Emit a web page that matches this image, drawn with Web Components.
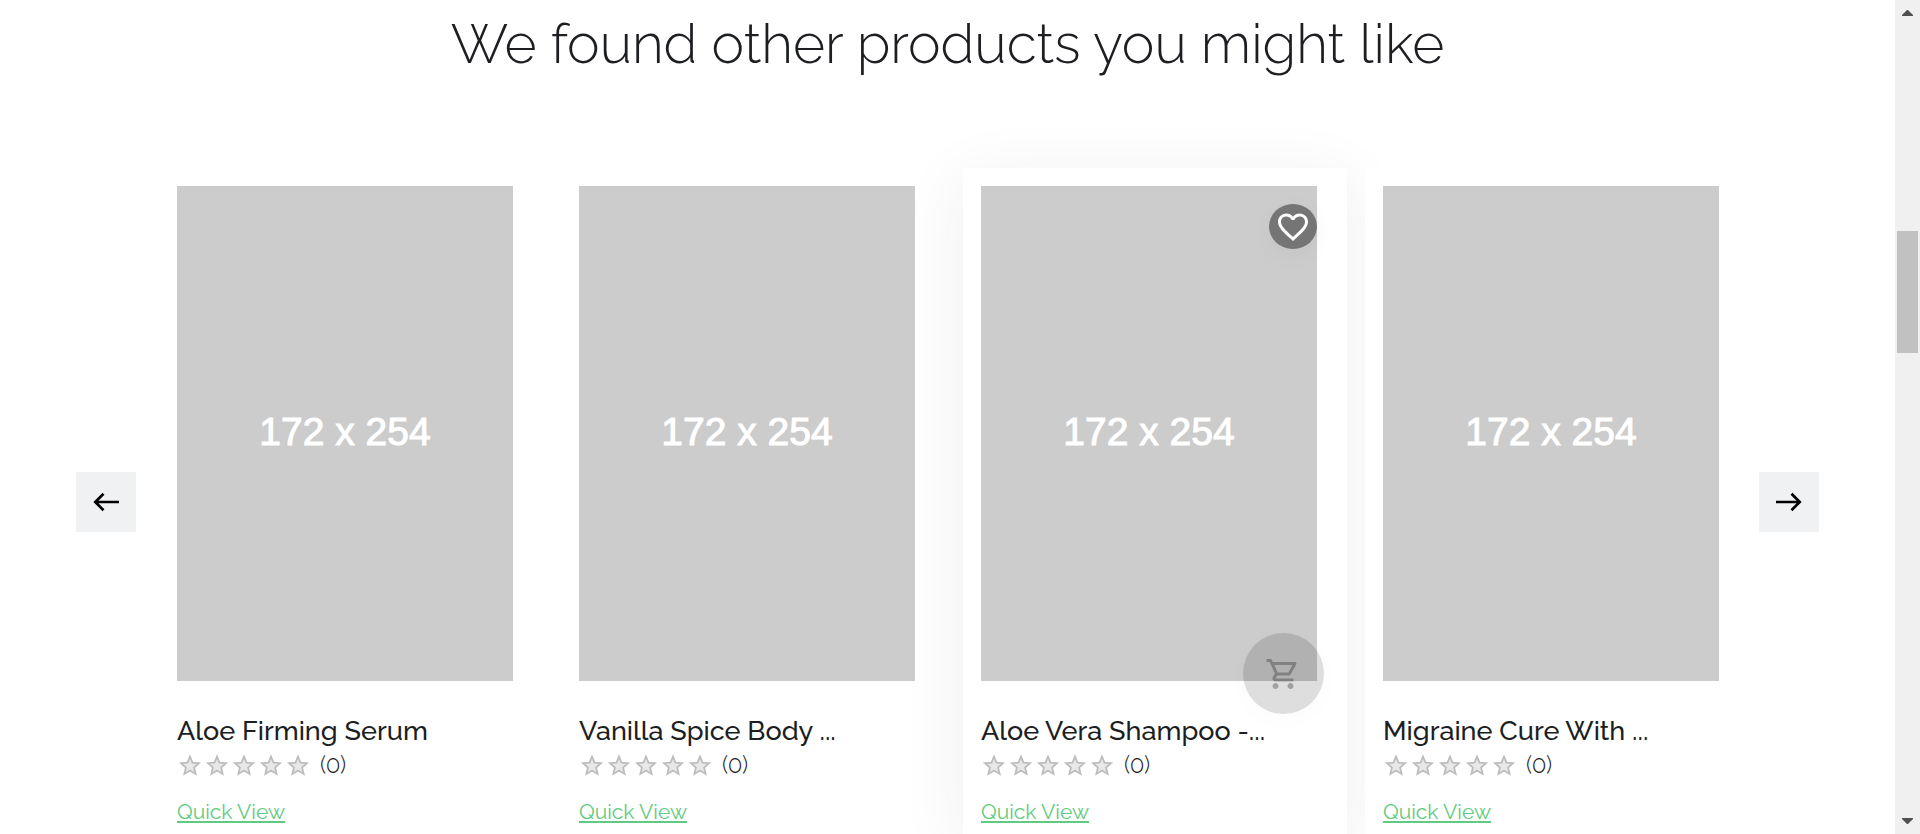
<!DOCTYPE html>
<html lang="en">
<head>
<meta charset="utf-8">
<title>Products you might like</title>
<style>
  html, body { margin: 0; height: 100%; overflow: hidden; background: #fff; }
  body { font-family: Raleway, "Open Sans", sans-serif; color: #1c1e22; }
</style>
</head>
<body>
<shop-page>
  <product-carousel heading="We found other products you might like">
    <product-card name="Aloe Firming Serum"></product-card>
    <product-card name="Vanilla Spice Body ..."></product-card>
    <product-card name="Aloe Vera Shampoo -..." active></product-card>
    <product-card name="Migraine Cure With ..."></product-card>
  </product-carousel>
</shop-page>
<script>
class ShopPage extends HTMLElement {
  constructor() {
    super();
    this.attachShadow({ mode: 'open' }).innerHTML = `
      <style>
        :host { display: flex; height: 100vh; overflow: hidden; }
        main { flex: 1; min-width: 0; overflow: hidden; }
      </style>
      <main><slot></slot></main>
      <page-scrollbar></page-scrollbar>`;
  }
}

class PageScrollbar extends HTMLElement {
  constructor() {
    super();
    this.attachShadow({ mode: 'open' }).innerHTML = `
      <style>
        :host { display: flex; flex-direction: column; width: 25px; background: #f0f0f0; }
        svg { display: block; width: 25px; height: 25px; fill: #505050; }
        .track { flex: 1; display: grid; grid-template-rows: 206fr 122fr 456fr; padding: 0 2px; }
        .thumb { grid-row: 2; background: #c1c1c1; }
      </style>
      <svg viewBox="0 0 25 25"><path d="M7 16v-1l5-5h1l5 5v1z"/></svg>
      <div class="track"><div class="thumb"></div></div>
      <svg viewBox="0 0 25 25"><path d="M7 9v1l5 5h1l5-5V9z"/></svg>`;
  }
}

class NavButton extends HTMLElement {
  constructor() {
    super();
    const next = this.getAttribute('direction') === 'next';
    this.attachShadow({ mode: 'open' }).innerHTML = `
      <style>
        :host { display: block; }
        button { display: grid; place-items: center; width: 60px; height: 60px; padding: 0; border: 0; background: #f0f1f3; }
        svg { width: 30px; height: 30px; fill: none; stroke: #000; stroke-width: 2.7; }
      </style>
      <button type="button" aria-label="${next ? 'Next' : 'Previous'} products">
        <svg viewBox="0 0 30 30"><path d="${next
          ? 'M17.5 6.8L25.7 15l-8.2 8.2M25.7 15H2'
          : 'M12.5 6.8L4.3 15l8.2 8.2M4.3 15H28'}"/></svg>
      </button>`;
  }
}

class ProductCarousel extends HTMLElement {
  constructor() {
    super();
    this.attachShadow({ mode: 'open' }).innerHTML = `
      <style>
        :host { display: block; padding: 12px 76px 0; }
        h2 { margin: 0 0 92px; font-size: 55px; line-height: 64px; font-weight: 300; text-align: center; }
        .row { display: flex; align-items: center; }
        .cards { flex: 1; display: grid; grid-template-columns: repeat(4, minmax(0, 1fr)); gap: 18px; margin: 0 10px 0 23px; }
      </style>
      <h2></h2>
      <div class="row">
        <nav-button direction="previous"></nav-button>
        <div class="cards"><slot></slot></div>
        <nav-button direction="next"></nav-button>
      </div>`;
    this.shadowRoot.querySelector('h2').textContent = this.getAttribute('heading');
  }
}

class StarRating extends HTMLElement {
  constructor() {
    super();
    const star = '<svg viewBox="0 0 24 24"><path d="M12 3.6l2.5 6 6.5.6-4.9 4.3 1.5 6.4L12 17.5l-5.6 3.4 1.5-6.4L3 10.2l6.5-.6z"/></svg>';
    this.attachShadow({ mode: 'open' }).innerHTML = `
      <style>
        :host { display: flex; align-items: center; height: 30px; gap: 10px; padding-left: 1px; font-size: 24px; line-height: 30px; font-weight: 300; }
        .stars { display: flex; gap: 3px; }
        svg { display: block; width: 24px; height: 24px; fill: #e8e8e8; stroke: #bdbdbd; stroke-width: 1.8; }
      </style>
      <div class="stars" role="img" aria-label="0 out of 5 stars">${star.repeat(5)}</div>
      <span><slot></slot></span>`;
  }
}

class ProductCard extends HTMLElement {
  constructor() {
    super();
    const actions = this.hasAttribute('active') ? `
      <button class="wish" type="button" aria-label="Add to wish list"><svg viewBox="0 0 24 24"><path d="M16.5 3c-1.74 0-3.41.81-4.5 2.09C10.91 3.81 9.24 3 7.5 3 4.42 3 2 5.42 2 8.5c0 3.78 3.4 6.86 8.55 11.54L12 21.35l1.45-1.32C18.6 15.36 22 12.28 22 8.5 22 5.42 19.58 3 16.5 3zm-4.4 15.55l-.1.1-.1-.1C7.14 14.24 4 11.39 4 8.5 4 6.5 5.5 5 7.5 5c1.54 0 3.04.99 3.57 2.36h1.87C13.46 5.99 14.96 5 16.5 5c2 0 3.5 1.5 3.5 3.5 0 2.89-3.14 5.74-7.9 10.05z"/></svg></button>
      <button class="cart" type="button" disabled aria-label="Add to cart"><svg viewBox="0 0 24 24"><path d="M15.55 13c.75 0 1.41-.41 1.75-1.03l3.58-6.49A.996.996 0 0 0 20.01 4H5.21l-.94-2H1v2h2l3.6 7.59-1.35 2.44C4.52 15.37 5.48 17 7 17h12v-2H7l1.1-2h7.45zM6.16 6h12.15l-2.76 5H8.53L6.16 6zM7 18c-1.1 0-1.99.9-1.99 2S5.9 22 7 22s2-.9 2-2-.9-2-2-2zm10 0c-1.1 0-1.99.9-1.99 2s.89 2 1.99 2 2-.9 2-2-.9-2-2-2z"/></svg></button>` : '';
    this.attachShadow({ mode: 'open' }).innerHTML = `
      <style>
        :host { display: block; position: relative; box-sizing: border-box; padding: 18px 30px 9px 18px; background: #fff; }
        :host([active]) { box-shadow: 0 12px 60px rgba(10, 40, 30, .08); }
        .picture { position: relative; display: grid; place-items: center; aspect-ratio: 336 / 495; background: #ccc; color: #fff; font: 39px/48px "Liberation Sans", sans-serif; -webkit-text-stroke: 1px #fff; }
        .picture span { padding-bottom: 4px; }
        h3 { margin: 34px 0 3px; font-size: 27px; line-height: 32px; font-weight: 500; white-space: nowrap; }
        a { display: inline-block; margin-top: 18px; font-size: 21px; line-height: 28px; color: #5fcb80; text-decoration: underline 2px; text-underline-offset: 2px; text-decoration-skip-ink: none; }
        button { position: absolute; display: grid; place-items: center; padding: 0; border: 0; border-radius: 50%; }
        svg { width: 36px; height: 36px; }
        .wish { top: 18px; right: 0; width: 48px; height: 45px; background: #757575; fill: #fff; box-shadow: 0 6px 24px rgba(0, 0, 0, .04); }
        .cart { right: -7px; bottom: -33px; width: 81px; height: 81px; padding-right: 2px; background: rgba(0, 0, 0, .13); fill: rgba(0, 0, 0, .27); box-shadow: 0 6px 24px rgba(0, 0, 0, .02); }
      </style>
      <div class="picture"><span>172 x 254</span>${actions}</div>
      <h3></h3>
      <star-rating>(0)</star-rating>
      <a href="#quick-view">Quick View</a>`;
    this.shadowRoot.querySelector('h3').textContent = this.getAttribute('name');
  }
}

customElements.define('page-scrollbar', PageScrollbar);
customElements.define('nav-button', NavButton);
customElements.define('star-rating', StarRating);
customElements.define('product-card', ProductCard);
customElements.define('product-carousel', ProductCarousel);
customElements.define('shop-page', ShopPage);
</script>
</body>
</html>
